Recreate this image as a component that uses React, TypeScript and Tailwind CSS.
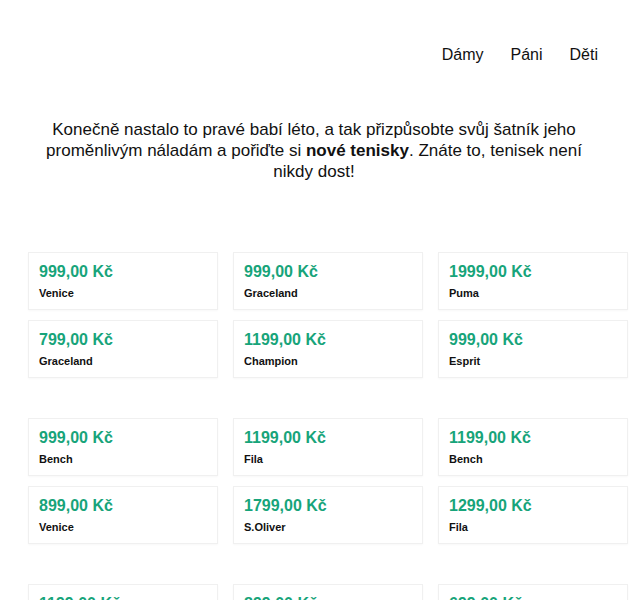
const groups = [
  [
    { price: "999,00 Kč", name: "Venice" },
    { price: "999,00 Kč", name: "Graceland" },
    { price: "1999,00 Kč", name: "Puma" },
    { price: "799,00 Kč", name: "Graceland" },
    { price: "1199,00 Kč", name: "Champion" },
    { price: "999,00 Kč", name: "Esprit" },
  ],
  [
    { price: "999,00 Kč", name: "Bench" },
    { price: "1199,00 Kč", name: "Fila" },
    { price: "1199,00 Kč", name: "Bench" },
    { price: "899,00 Kč", name: "Venice" },
    { price: "1799,00 Kč", name: "S.Oliver" },
    { price: "1299,00 Kč", name: "Fila" },
  ],
  [
    { price: "1199,00 Kč", name: "Venice" },
    { price: "899,00 Kč", name: "Bench" },
    { price: "699,00 Kč", name: "Puma" },
    { price: "999,00 Kč", name: "Fila" },
    { price: "1299,00 Kč", name: "Champion" },
    { price: "799,00 Kč", name: "Esprit" },
  ],
];

function Card({ price, name }: { price: string; name: string }) {
  return (
    <div className="h-[58px] border border-[#f0f0f0] bg-white px-[10px] pt-[10px] shadow-[0_1px_2px_rgba(0,0,0,0.03)]">
      <div className="text-[16px] leading-[18px] font-bold text-[#17a47a]">{price}</div>
      <div className="mt-[6px] text-[11px] leading-[13px] font-bold text-[#111]">{name}</div>
    </div>
  );
}

export default function App() {
  return (
    <div className="min-h-screen bg-white font-['Liberation_Sans',Arial,sans-serif] text-[#111]">
      <nav className="flex justify-end pt-[45px] pr-[42px]">
        <ul className="flex gap-[27px] text-[16px] leading-[20px]">
          <li>Dámy</li>
          <li>Páni</li>
          <li>Děti</li>
        </ul>
      </nav>

      <p className="mt-[54px] ml-[28px] w-[572px] text-center text-[17px] leading-[21px]">
        Konečně nastalo to pravé babí léto, a tak přizpůsobte svůj šatník jeho proměnlivým náladám a
        pořiďte si <strong>nové tenisky</strong>. Znáte to, tenisek není nikdy dost!
      </p>

      <div className="mt-[70px] ml-[28px] flex w-[600px] flex-col gap-[40px] pb-10">
        {groups.map((items, i) => (
          <div key={i} className="grid grid-cols-3 gap-x-[15px] gap-y-[10px]">
            {items.map((item, j) => (
              <Card key={j} {...item} />
            ))}
          </div>
        ))}
      </div>
    </div>
  );
}
